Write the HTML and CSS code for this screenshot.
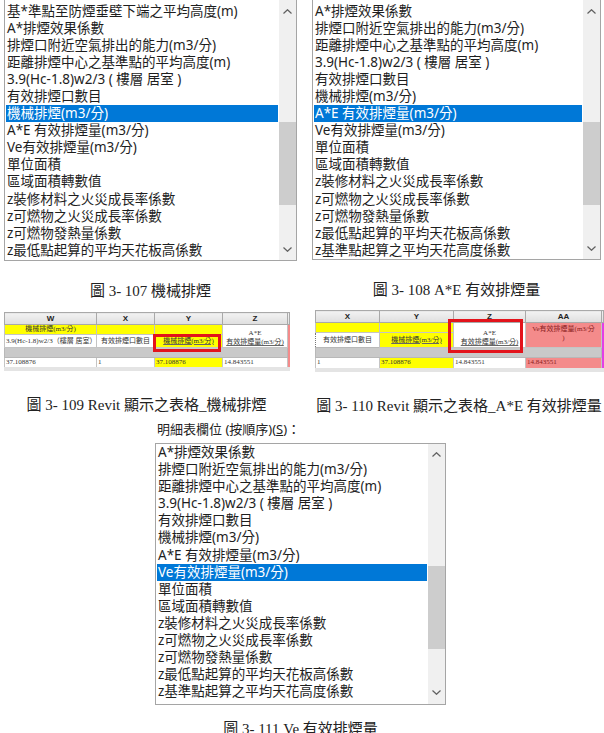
FILE: index.html
```html
<!DOCTYPE html>
<html>
<head>
  <meta charset="utf-8">
  <title>排煙欄位</title>
  <link rel="stylesheet" href="styles.css">
</head>
<body>
<div class="pair lists">
  <figure class="fig fig-107">
    <div class="listbox cropped">
      <ul class="items">
        <li>基*準點至防煙垂壁下端之平均高度(m)</li>
        <li>A*排煙效果係數</li>
        <li>排煙口附近空氣排出的能力(m3/分)</li>
        <li>距離排煙中心之基準點的平均高度(m)</li>
        <li>3.9(Hc-1.8)w2/3 ( 樓層 居室 )</li>
        <li>有效排煙口數目</li>
        <li class="selected">機械排煙(m3/分)</li>
        <li>A*E 有效排煙量(m3/分)</li>
        <li>Ve有效排煙量(m3/分)</li>
        <li>單位面積</li>
        <li>區域面積轉數值</li>
        <li>z裝修材料之火災成長率係數</li>
        <li>z可燃物之火災成長率係數</li>
        <li>z可燃物發熱量係數</li>
        <li>z最低點起算的平均天花板高係數</li>
      </ul>
      <div class="scrollbar">
        <span class="arrow"><svg width="9" height="5" viewBox="0 0 9 5"><polyline points="0.5,4.5 4.5,0.7 8.5,4.5"/></svg></span>
        <span class="track"><span class="thumb"></span></span>
        <span class="arrow"><svg width="9" height="5" viewBox="0 0 9 5"><polyline points="0.5,0.5 4.5,4.3 8.5,0.5"/></svg></span>
      </div>
    </div>
    <figcaption>圖 3- 107 機械排煙</figcaption>
  </figure>

  <figure class="fig fig-108">
    <div class="listbox cropped">
      <ul class="items">
        <li>A*排煙效果係數</li>
        <li>排煙口附近空氣排出的能力(m3/分)</li>
        <li>距離排煙中心之基準點的平均高度(m)</li>
        <li>3.9(Hc-1.8)w2/3 ( 樓層 居室 )</li>
        <li>有效排煙口數目</li>
        <li>機械排煙(m3/分)</li>
        <li class="selected">A*E 有效排煙量(m3/分)</li>
        <li>Ve有效排煙量(m3/分)</li>
        <li>單位面積</li>
        <li>區域面積轉數值</li>
        <li>z裝修材料之火災成長率係數</li>
        <li>z可燃物之火災成長率係數</li>
        <li>z可燃物發熱量係數</li>
        <li>z最低點起算的平均天花板高係數</li>
        <li>z基準點起算之平均天花高度係數</li>
      </ul>
      <div class="scrollbar">
        <span class="arrow"><svg width="9" height="5" viewBox="0 0 9 5"><polyline points="0.5,4.5 4.5,0.7 8.5,4.5"/></svg></span>
        <span class="track"><span class="thumb"></span></span>
        <span class="arrow"><svg width="9" height="5" viewBox="0 0 9 5"><polyline points="0.5,0.5 4.5,4.3 8.5,0.5"/></svg></span>
      </div>
    </div>
    <figcaption>圖 3- 108 A*E 有效排煙量</figcaption>
  </figure>
</div>

<div class="pair sheets">
  <figure class="fig fig-109">
    <table class="sheet sheet-a">
      <colgroup>
        <col style="width: 92px"><col style="width: 58px"><col style="width: 68px"><col style="width: 65px"><col style="width: 2px">
      </colgroup>
      <tr class="head"><th>W</th><th>X</th><th>Y</th><th>Z</th><th class="edge"></th></tr>
      <tr class="title">
        <td class="hl">機械排煙(m3/分)</td>
        <td class="hl"></td>
        <td class="hl"></td>
        <td rowspan="2" class="two-line"><span>A*E</span><span class="under">有效排煙量(m3/分)</span></td>
        <td rowspan="2" class="edge pink"></td>
      </tr>
      <tr class="names">
        <td class="clip">3.9(Hc-1.8)w2/3（樓層 居室）</td>
        <td>有效排煙口數目</td>
        <td class="hl marked mark-y"><span class="under">機械排煙(m3/分)</span></td>
      </tr>
      <tr class="gap"><td colspan="4"></td><td class="edge pink"></td></tr>
      <tr class="data">
        <td>37.108876</td><td>1</td><td class="hl">37.108876</td><td>14.843551</td><td class="edge pink"></td>
      </tr>
    </table>
    <figcaption>圖 3- 109 Revit 顯示之表格_機械排煙</figcaption>
  </figure>

  <figure class="fig fig-110">
    <table class="sheet sheet-b">
      <colgroup>
        <col style="width: 64px"><col style="width: 74px"><col style="width: 72px"><col style="width: 76px"><col style="width: 2px">
      </colgroup>
      <tr class="head"><th>X</th><th>Y</th><th>Z</th><th>AA</th><th class="edge"></th></tr>
      <tr class="title">
        <td class="hl"></td>
        <td class="hl"></td>
        <td rowspan="2" class="two-line marked mark-z"><span>A*E</span><span class="under">有效排煙量(m3/分)</span></td>
        <td rowspan="2" class="pink two-line top">Ve有效排煙量(m3/分<br>)</td>
        <td rowspan="2" class="edge magenta"></td>
      </tr>
      <tr class="names">
        <td class="dotted">有效排煙口數目</td>
        <td class="hl"><span class="under">機械排煙(m3/分)</span></td>
      </tr>
      <tr class="gap"><td colspan="4"></td><td class="edge magenta"></td></tr>
      <tr class="data">
        <td>1</td><td class="hl">37.108876</td><td>14.843551</td><td class="pink">14.843551</td><td class="edge magenta"></td>
      </tr>
    </table>
    <figcaption>圖 3- 110 Revit 顯示之表格_A*E 有效排煙量</figcaption>
  </figure>
</div>

<figure class="fig fig-111">
  <div class="field-label">明細表欄位 (按順序)(<u>S</u>)：</div>
  <div class="listbox">
    <ul class="items">
      <li>A*排煙效果係數</li>
      <li>排煙口附近空氣排出的能力(m3/分)</li>
      <li>距離排煙中心之基準點的平均高度(m)</li>
      <li>3.9(Hc-1.8)w2/3 ( 樓層 居室 )</li>
      <li>有效排煙口數目</li>
      <li>機械排煙(m3/分)</li>
      <li>A*E 有效排煙量(m3/分)</li>
      <li class="selected">Ve有效排煙量(m3/分)</li>
      <li>單位面積</li>
      <li>區域面積轉數值</li>
      <li>z裝修材料之火災成長率係數</li>
      <li>z可燃物之火災成長率係數</li>
      <li>z可燃物發熱量係數</li>
      <li>z最低點起算的平均天花板高係數</li>
      <li>z基準點起算之平均天花高度係數</li>
    </ul>
    <div class="scrollbar">
      <span class="arrow"><svg width="9" height="5" viewBox="0 0 9 5"><polyline points="0.5,4.5 4.5,0.7 8.5,4.5"/></svg></span>
      <span class="track"><span class="thumb"></span></span>
      <span class="arrow"><svg width="9" height="5" viewBox="0 0 9 5"><polyline points="0.5,0.5 4.5,4.3 8.5,0.5"/></svg></span>
    </div>
  </div>
  <figcaption>圖 3- 111 Ve 有效排煙量</figcaption>
</figure>
</body>
</html>
```

FILE: styles.css
```css
* {
  box-sizing: border-box;
}

body {
  margin: 0;
  width: 604px;
  height: 733px;
  overflow: hidden;
  background: #fff;
  color: #1e1e1e;
  font-family: "Noto Sans", "Noto Sans CJK TC", sans-serif;
}

figure {
  margin: 0;
}

figcaption {
  text-align: center;
  white-space: nowrap;
  font-family: "Liberation Serif", "Noto Sans CJK TC", serif;
  font-size: 15px;
  line-height: 20px;
  color: #222;
}

.pair {
  display: flex;
  align-items: flex-start;
}

/* list boxes */

.lists {
  padding-left: 4px;
  gap: 15px;
}

.fig-107 {
  width: 293px;
}

.fig-108 {
  width: 289px;
}

.fig-107 figcaption,
.fig-108 figcaption {
  margin-top: 20px;
}

.listbox {
  display: flex;
  height: 262px;
  border: 1px solid #a5a5a5;
  background: #fff;
}

/* top edge sits just above the page */
.listbox.cropped {
  margin-top: -1px;
}

.fig-108 .listbox {
  height: 261px;
}

.items {
  flex: 1;
  min-width: 0;
  margin: 0;
  padding: 2.5px 1px 0;
  list-style: none;
  font-size: 13.5px;
  line-height: 17.1px;
  white-space: nowrap;
  overflow: hidden;
}

.items li {
  height: 17.1px;
  padding-left: 1px;
}

.items li.selected {
  background: #0078d7;
  color: #fff;
}

.scrollbar {
  width: 17px;
  display: flex;
  flex-direction: column;
  background: #f0f0f0;
}

.arrow {
  height: 22px;
  display: flex;
  align-items: center;
  justify-content: center;
}

.arrow polyline {
  fill: none;
  stroke: #606060;
  stroke-width: 1.2;
}

.track {
  flex: 1;
}

.thumb {
  display: block;
  margin-top: 100px;
  height: 83px;
  background: #cdcdcd;
}

/* Revit schedule tables */

.sheets {
  margin-top: 9px;
  padding-left: 4px;
  gap: 26px;
}

.fig-109 {
  width: 285px;
}

.fig-110 {
  width: 288px;
}

.fig-109 figcaption,
.fig-110 figcaption {
  margin-top: 24px;
}

.sheet {
  border-collapse: collapse;
  table-layout: fixed;
  width: 100%;
  font-family: "Liberation Serif", "Noto Sans CJK TC", serif;
  font-size: 7px;
  line-height: 9px;
  color: #333;
  border-bottom: 4px solid #e4e4e4;
}

.sheet-a {
  margin-top: 2px;
}

.sheet th {
  height: 12px;
  padding: 0;
  font-family: "Liberation Sans", sans-serif;
  font-size: 8px;
  font-weight: bold;
  color: #222;
  background: linear-gradient(#f2f2f2, #dedede);
  border: 1px solid #a9a9a9;
}

.sheet th.edge {
  border-left: 0;
}

.sheet td {
  padding: 0 1px;
  border: 1px solid #c4c4c4;
  white-space: nowrap;
  overflow: hidden;
  text-align: center;
  background: #fff;
}

.sheet .title td {
  height: 10px;
}

.sheet-a .names td {
  height: 13px;
}

.sheet-b .names td {
  height: 15px;
}

.sheet .gap td {
  height: 10px;
  background: #c9c9c9;
  border-color: #b8b8b8;
}

.sheet .data td {
  height: 11px;
  text-align: left;
}

.sheet-b .data td {
  height: 12px;
}

.sheet td.hl {
  background: #ffff00;
}

.sheet td.pink {
  background: #f48b8b;
  color: #8a1c1c;
}

.sheet td.edge {
  padding: 0;
  border: 0;
}

.sheet td.magenta {
  background: #e23fe6;
}

.sheet .gap td.pink {
  background: #f48b8b;
}

.sheet td.clip {
  text-align: right;
  padding-right: 5px;
}

.sheet td.dotted {
  border: 1px dotted #777;
}

.two-line {
  vertical-align: bottom;
}

.two-line span {
  display: block;
}

.two-line.top {
  vertical-align: top;
  white-space: normal;
  padding-top: 2px;
}

.under {
  text-decoration: underline;
  text-decoration-color: #666;
}

/* red highlight frames drawn over the picked cells */
.sheet td.marked {
  position: relative;
  overflow: visible;
}

.sheet td.marked::after {
  content: "";
  position: absolute;
  border: 3px solid #e3131b;
}

.mark-y::after {
  top: -1px;
  right: 1px;
  bottom: -5px;
  left: -2px;
}

.mark-z::after {
  top: -4px;
  right: 2px;
  bottom: -6px;
  left: -6px;
}

/* field picker */

.fig-111 {
  width: 291px;
  margin-left: 155px;
}

.field-label {
  margin-top: 4px;
  padding-left: 2px;
  font-size: 13px;
  line-height: 18px;
  color: #222;
}

.fig-111 .listbox {
  margin-top: 5px;
}

.fig-111 .items {
  padding-top: 0.5px;
}

.fig-111 figcaption {
  margin-top: 14px;
}
```
